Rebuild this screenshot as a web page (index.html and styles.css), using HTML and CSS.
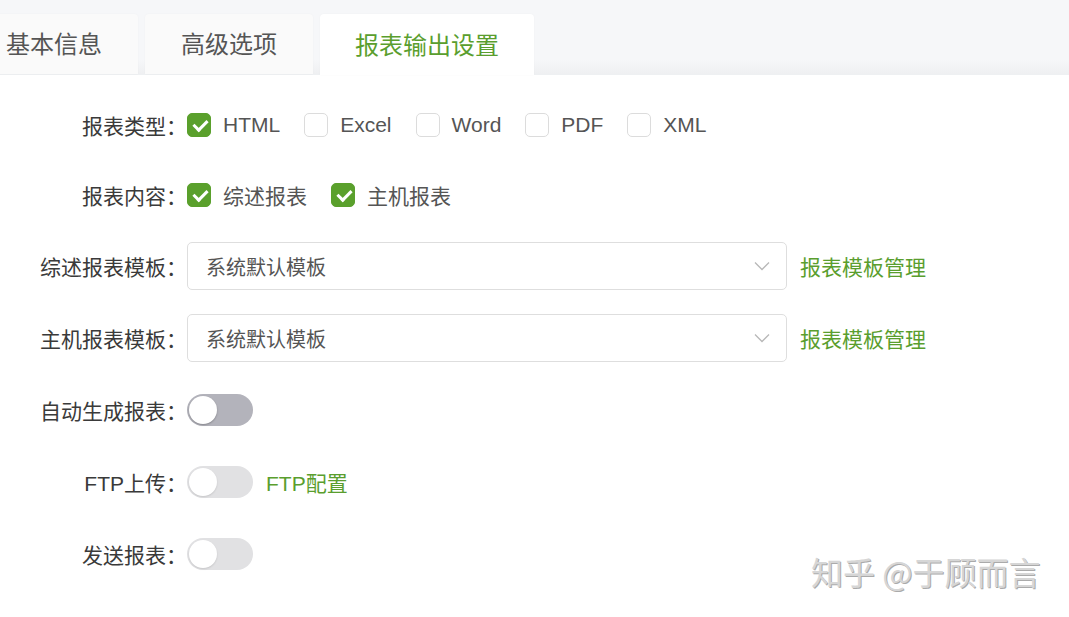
FILE: index.html
```html
<!DOCTYPE html>
<html lang="zh-CN">
    <head>
        <meta charset="UTF-8" />
        <meta name="viewport" content="width=device-width, initial-scale=1.0" />
        <title>报表输出设置</title>
        <link rel="stylesheet" href="styles.css">
    </head>
    <body>
        <div class="tab-bar">
            <div class="tab tab-first">基本信息</div>
            <div class="tab">高级选项</div>
            <div class="tab active">报表输出设置</div>
        </div>

        <div class="form">
            <div class="form-row row-short">
                <label class="form-label">报表类型：</label>
                <div class="options">
                    <span class="check-item"><span class="checkbox checked"></span>HTML</span>
                    <span class="check-item"><span class="checkbox"></span>Excel</span>
                    <span class="check-item"><span class="checkbox"></span>Word</span>
                    <span class="check-item"><span class="checkbox"></span>PDF</span>
                    <span class="check-item"><span class="checkbox"></span>XML</span>
                </div>
            </div>

            <div class="form-row row-short">
                <label class="form-label">报表内容：</label>
                <div class="options">
                    <span class="check-item"><span class="checkbox checked"></span>综述报表</span>
                    <span class="check-item"><span class="checkbox checked"></span>主机报表</span>
                </div>
            </div>

            <div class="form-row">
                <label class="form-label">综述报表模板：</label>
                <div class="select">
                    <span>系统默认模板</span>
                    <svg class="chevron" width="16" height="10" viewBox="0 0 16 10">
                        <path d="M1 1.5 L8 8.5 L15 1.5" fill="none" stroke="#b8b8b8" stroke-width="1.3" />
                    </svg>
                </div>
                <a class="link">报表模板管理</a>
            </div>

            <div class="form-row">
                <label class="form-label">主机报表模板：</label>
                <div class="select">
                    <span>系统默认模板</span>
                    <svg class="chevron" width="16" height="10" viewBox="0 0 16 10">
                        <path d="M1 1.5 L8 8.5 L15 1.5" fill="none" stroke="#b8b8b8" stroke-width="1.3" />
                    </svg>
                </div>
                <a class="link">报表模板管理</a>
            </div>

            <div class="form-row">
                <label class="form-label">自动生成报表：</label>
                <span class="switch"></span>
            </div>

            <div class="form-row">
                <label class="form-label">FTP上传：</label>
                <span class="switch disabled"></span>
                <a class="link">FTP配置</a>
            </div>

            <div class="form-row">
                <label class="form-label">发送报表：</label>
                <span class="switch disabled"></span>
            </div>
        </div>

        <div class="watermark">知乎 @于顾而言</div>
    </body>
</html>
```

FILE: styles.css
```css
body {
    margin: 0;
    background: #fff;
    font-family: "Liberation Sans", "Noto Sans CJK SC", sans-serif;
    color: #444;
    position: relative;
    height: 617px;
    overflow: hidden;
}

/* 탭 */
.tab-bar {
    display: flex;
    align-items: flex-end;
    gap: 7px;
    height: 75px;
    background: linear-gradient(#f6f7f9 80%, #eff0f2);
    border-bottom: 1px solid #eef0f2;
    box-sizing: border-box;
}

.tab {
    height: 60px;
    box-sizing: border-box;
    padding: 0 36px 4px;
    display: flex;
    align-items: center;
    font-size: 24px;
    color: #555;
    background: #fafafa;
    border-radius: 4px 4px 0 0;
    box-shadow: 0 0 2px rgba(0, 0, 0, 0.04);
}

.tab-first {
    margin-left: -30px;
}

.tab.active {
    background: #fff;
    color: #5a9e2e;
    padding: 0 35px 3px;
    height: 61px;
    margin-bottom: -1px;
}

/* 폼 */
.form {
    padding-top: 15px;
}

.form-row {
    display: flex;
    align-items: center;
    height: 72px;
    font-size: 21px;
}

.form-row.row-short {
    height: 70px;
}

.form-label {
    width: 187px;
    text-align: right;
    color: #3a3a3a;
    flex-shrink: 0;
}

.options {
    display: flex;
    align-items: center;
}

.check-item {
    display: flex;
    align-items: center;
    gap: 12px;
    margin-right: 24px;
    color: #555;
}

.checkbox {
    width: 24px;
    height: 24px;
    box-sizing: border-box;
    border: 1px solid #dcdcdc;
    border-radius: 5px;
    background: #fff;
    position: relative;
}

.checkbox.checked {
    background: #5aa02c;
    border-color: #5aa02c;
}

.checkbox.checked::after {
    content: "";
    position: absolute;
    left: 8px;
    top: 3px;
    width: 6px;
    height: 11px;
    border: solid #fff;
    border-width: 0 3px 3px 0;
    transform: rotate(45deg);
}

.select {
    width: 600px;
    height: 48px;
    box-sizing: border-box;
    border: 1px solid #dedede;
    border-radius: 5px;
    display: flex;
    align-items: center;
    justify-content: space-between;
    padding: 0 16px 0 18px;
    color: #555;
    font-size: 20px;
}

.link {
    color: #5a9e2e;
    margin-left: 13px;
    font-size: 21px;
}

.switch {
    width: 66px;
    height: 32px;
    border-radius: 16px;
    background: #b3b3bb;
    position: relative;
}

.switch::after {
    content: "";
    position: absolute;
    left: 2px;
    top: 2px;
    width: 28px;
    height: 28px;
    border-radius: 50%;
    background: #fff;
    box-shadow: 0 1px 2px rgba(0, 0, 0, 0.25);
}

.switch.disabled {
    background: #e1e1e3;
}

.switch.disabled::after {
    box-shadow: 0 1px 2px rgba(0, 0, 0, 0.12);
}

.switch + .link {
    margin-left: 13px;
}

/* 워터마크 */
.watermark {
    position: absolute;
    left: 811px;
    top: 551px;
    font-family: "Noto Sans CJK SC", sans-serif;
    font-size: 32px;
    line-height: 1.3;
    color: #d6d6d6;
    text-shadow: 1px 1px 0 #aaa;
}
```
